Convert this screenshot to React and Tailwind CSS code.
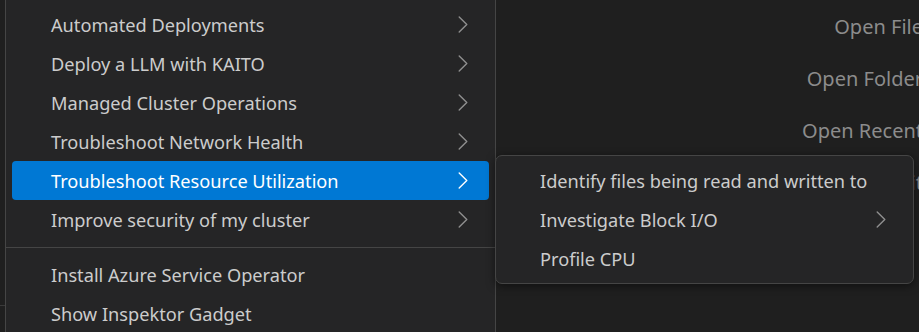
import React from 'react';

const font = { fontFamily: '"Noto Sans", "Open Sans", sans-serif' };

const Chevron = ({ className }) => (
    <svg width="10" height="17" viewBox="0 0 10 17" className={className} fill="none">
        <path d="M1.2 1 L8.8 8.5 L1.2 16" stroke="currentColor" strokeWidth="1.4" strokeLinecap="round" strokeLinejoin="round" />
    </svg>
);

const MenuRow = ({ label, sub, active, chevronRight = 'pr-[21px]', padLeft = 'pl-[39px]' }) => (
    <div
        className={`mx-[6px] h-[39px] flex items-center rounded-[4px] ${padLeft} ${chevronRight} ${
            active ? 'bg-[#0078d4] text-white' : 'text-[#cccccc]'
        }`}
    >
        <span className="flex-1 pt-[2px] text-[18.2px] whitespace-nowrap">{label}</span>
        {sub && <Chevron className={active ? 'text-white' : 'text-[#8f8f8f]'} />}
    </div>
);

const mainItems = [
    { label: 'Automated Deployments', sub: true },
    { label: 'Deploy a LLM with KAITO', sub: true },
    { label: 'Managed Cluster Operations', sub: true },
    { label: 'Troubleshoot Network Health', sub: true },
    { label: 'Troubleshoot Resource Utilization', sub: true, active: true },
    { label: 'Improve security of my cluster', sub: true },
];

const subItems = [
    { label: 'Identify files being read and written to' },
    { label: 'Investigate Block I/O', sub: true },
    { label: 'Profile CPU' },
];

export default function App() {
    return (
        <div style={font} className="relative w-[919px] h-[332px] overflow-hidden bg-[#1f1f1f] flex">
            {/* left edge strip */}
            <div className="w-[5px] shrink-0 flex flex-col">
                <div className="h-[305px]" />
                <div className="h-px bg-[#3a3a3a]" />
            </div>

            {/* main context menu */}
            <div className="w-[491px] shrink-0 bg-[#252526] border-x border-[#454545] pt-[5px]">
                {mainItems.map((item) => (
                    <MenuRow key={item.label} {...item} />
                ))}
                <div className="mt-[8px] mb-[7px] h-px bg-[#454545]" />
                <MenuRow label="Install Azure Service Operator" />
                <MenuRow label="Show Inspektor Gadget" />
            </div>

            {/* welcome page shortcuts behind */}
            <div className="flex-1 flex flex-col items-end mr-[-4px] pt-[1px] text-[20px] text-[#8c8c8c] whitespace-nowrap">
                <div className="h-[52px] flex items-center">Open File</div>
                <div className="h-[52px] flex items-center">Open Folder</div>
                <div className="h-[52px] flex items-center">Open Recent</div>
                <div className="h-[52px] flex items-center">Commit</div>
            </div>

            {/* submenu */}
            <div className="absolute left-[495px] top-[155px] w-[419px] h-[129px] bg-[#252526] border border-[#454545] rounded-[7px] shadow-[0_2px_8px_rgba(0,0,0,0.5)] pt-[5px]">
                {subItems.map((item) => (
                    <MenuRow key={item.label} {...item} padLeft="pl-[38px]" chevronRight="pr-[21px]" />
                ))}
            </div>
        </div>
    );
}
